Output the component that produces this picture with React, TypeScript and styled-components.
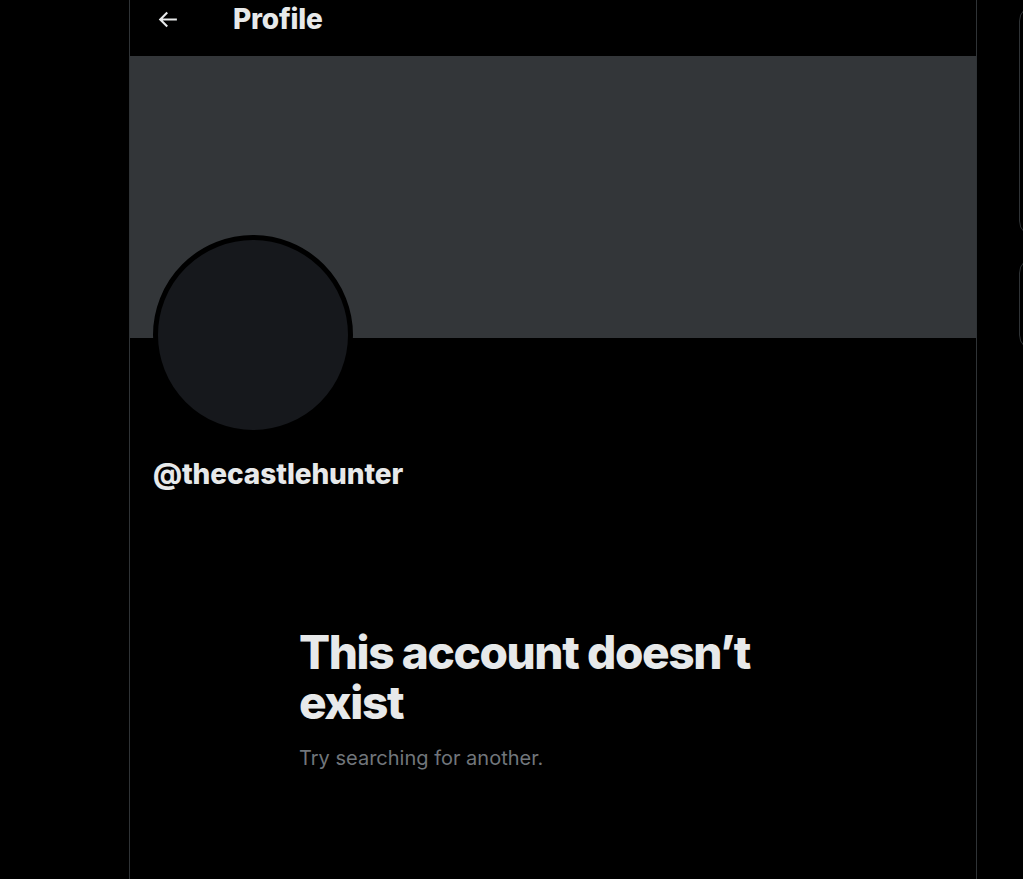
import React from "react";
import styled, { createGlobalStyle } from "styled-components";

const Global = createGlobalStyle`
  html, body { margin: 0; padding: 0; background: #000; overflow: hidden; }
  body { font-family: Inter, "Noto Sans", sans-serif; color: #e7e9ea; }
`;

const Page = styled.div`
  display: flex;
  width: 1023px;
  height: 879px;
  overflow: hidden;
  background: #000;
`;

const LeftSpace = styled.div`
  width: 129px;
  flex: none;
`;

const Main = styled.main`
  width: 846px;
  flex: none;
  border-left: 1px solid #2f3336;
  border-right: 1px solid #2f3336;
  display: flex;
  flex-direction: column;
`;

const Header = styled.header`
  height: 56px;
  display: flex;
  align-items: flex-start;
  padding-left: 24px;
  box-sizing: border-box;
`;

const BackButton = styled.div`
  width: 26px;
  height: 26px;
  margin-top: 6px;
  color: #e7e9ea;
  display: flex;
  align-items: center;
  justify-content: center;
`;

const Title = styled.h1`
  margin: 0 0 0 53px;
  font-size: 28px;
  line-height: 38px;
  font-weight: 800;
  letter-spacing: -0.2px;
  color: #e7e9ea;
`;

const Banner = styled.div`
  height: 282px;
  background: #333639;
`;

const AvatarRow = styled.div`
  padding-left: 23px;
  margin-top: -103px;
`;

const Avatar = styled.div`
  width: 190px;
  height: 190px;
  border-radius: 50%;
  background: #16181c;
  border: 5px solid #000;
`;

const Handle = styled.div`
  margin: 22px 0 0 23px;
  font-size: 28px;
  line-height: 34px;
  font-weight: 800;
  color: #e7e9ea;
  letter-spacing: -0.1px;
`;

const Empty = styled.section`
  margin: 136px 0 0 169px;
  width: 470px;
`;

const EmptyTitle = styled.h2`
  margin: 0;
  font-size: 46px;
  line-height: 50px;
  font-weight: 800;
  letter-spacing: -1.4px;
  color: #e7e9ea;
`;

const EmptyText = styled.p`
  margin: 17px 0 0;
  font-size: 20px;
  line-height: 28px;
  color: #71767b;
`;

const Side = styled.aside`
  margin-left: 42px;
  padding-top: 5px;
  display: flex;
  flex-direction: column;
  gap: 20px;
  flex: none;
  width: 300px;
`;

const SideBox = styled.div<{ $h: number }>`
  height: ${(p) => p.$h}px;
  border: 1px solid #2f3336;
  border-radius: 16px;
`;

export default function App() {
  return (
    <>
      <Global />
      <Page>
        <LeftSpace />
        <Main>
          <Header>
            <BackButton>
              <svg width="25" height="25" viewBox="0 0 24 24" fill="currentColor">
                <path d="M7.414 13l5.043 5.04-1.414 1.42L3.586 12l7.457-7.46 1.414 1.42L7.414 11H21v2H7.414z" />
              </svg>
            </BackButton>
            <Title>Profile</Title>
          </Header>
          <Banner />
          <AvatarRow>
            <Avatar />
          </AvatarRow>
          <Handle>@thecastlehunter</Handle>
          <Empty>
            <EmptyTitle>This account doesn’t exist</EmptyTitle>
            <EmptyText>Try searching for another.</EmptyText>
          </Empty>
        </Main>
        <Side>
          <SideBox $h={230} />
          <SideBox $h={92} />
        </Side>
      </Page>
    </>
  );
}
